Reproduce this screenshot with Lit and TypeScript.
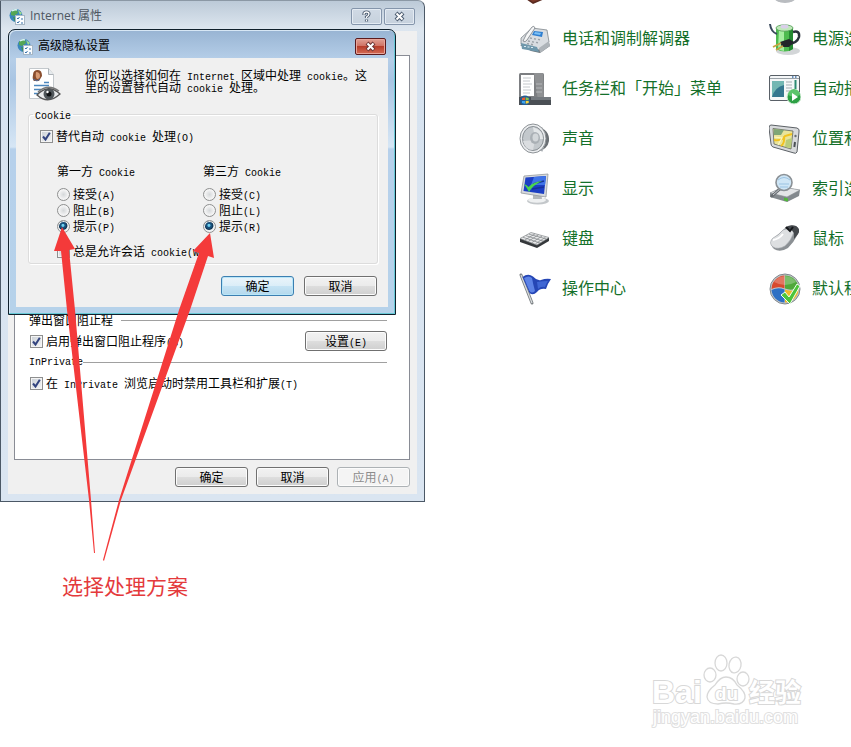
import { LitElement, html, css, svg, nothing, TemplateResult } from "lit";
import { customElement, property } from "lit/decorators.js";

// Bitmap-style dialog text: full-width glyphs at 12px, half-width runs at 6px per letter.
const mixed = (text: string) =>
  text
    .split(/([\x20-\x7e]+)/)
    .filter((part) => part)
    .map((part) => (/^[\x20-\x7e]/.test(part) ? html`<span class="half">${part}</span>` : part));

const icons: Record<string, TemplateResult> = {
  mail: svg`<path d="M4 24 L20 18 L28 25 L14 31Z" fill="#5a2a20"/><path d="M4 22 L20 17 L28 24 L14 29Z" fill="#7d3a2b"/>`,
  font: svg`<ellipse cx="16" cy="24" rx="11" ry="6" fill="#b9bcc0"/><ellipse cx="15" cy="22" rx="9" ry="5" fill="#dcdee1"/>`,
  phone: svg`
    <path d="M1 22 L12 28 L21 30 L31 23 L30 20 L14 18Z" fill="#6b7176"/>
    <path d="M2 15 L13 5 L28 7 L30 19 L20 27 L2 21Z" fill="#d9dde1" stroke="#7f868c" stroke-width=".8"/>
    <path d="M2 20 L18 24 L20 29 L3 26Z" fill="#6f98ac"/><path d="M20 25 L30 18 L31 23 L21 30Z" fill="#aeb4b9"/>
    <path d="M15 8 L24 9 L23 14 L13 12Z" fill="#2f7fd0"/><path d="M16 9 L22 10 L21 12 L15 11Z" fill="#7cc0f5"/>
    <path d="M11 15l2 .4m2 .3l2 .4m2 .3l2 .4M9 18l2 .4m2 .3l2 .4m2 .3l2 .4M8 20.600l2 .4m2 .3l2 .4" stroke="#9aa1a7" stroke-width="1.400"/>
    <path d="M4 18 Q6 12 13 4 Q15 2 16 5 L8 17 Q6 20 4 18Z" fill="#f5f6f7" stroke="#777e84" stroke-width=".8"/>
    <path d="M5 23.500h2m1.500 .5h2m1.500 .5h2" stroke="#dcebf2" stroke-width="1.200"/>`,
  taskbar: svg`
    <rect x="0" y="0" width="25" height="28" rx="1.500" fill="#7d7f82"/><path d="M15 0h9l1 28h-6z" fill="#8f9193"/>
    <rect x="2" y="2" width="13" height="21" fill="#fff"/>
    <path d="M4 5h8M4 8h7M4 11h9M4 14h7M4 17h8M4 20h7" stroke="#c4c8cc"/>
    <path d="M17 11h6M17 15h6M17 19h6" stroke="#b5b7ba" stroke-width="1"/>
    <rect x="0" y="24" width="32" height="8" fill="#4a4f55"/><path d="M12 24h20v3H12z" fill="#74797e"/>
    <circle cx="6" cy="27.500" r="5" fill="#215e98"/>
    <path d="M3 25l3-.7v2.800H3z" fill="#e65c30"/><path d="M6.700 24.200l3 .7v2.300h-3z" fill="#8bc34a"/>
    <path d="M3 28h3v2.800L3 30z" fill="#3ea5f0"/><path d="M6.700 28h3v2l-3 .8z" fill="#fbd53e"/>`,
  sound: svg`
    <path d="M18 3 Q31 7 30 18 Q29 26 18 29Z" fill="#6a6f74"/><path d="M22 5 Q28 15 22 28" stroke="#a7acb1" stroke-width="3" fill="none"/>
    <ellipse cx="14" cy="15.500" rx="13" ry="14.500" fill="#eceef0" stroke="#8d9296"/>
    <ellipse cx="14" cy="15.500" rx="10.500" ry="12" fill="#c3c8cc" stroke="#8a9095"/>
    <path d="M14 4 Q24 7 24 16 L16 16Z" fill="#e3e6e8"/><path d="M4 18 Q6 27 14 27 L16 17Z" fill="#dadde0"/>
    <ellipse cx="16" cy="15" rx="5" ry="6" fill="#aab0b5"/><ellipse cx="16.500" cy="14.500" rx="3" ry="4" fill="#d3d7da"/>`,
  display: svg`
    <ellipse cx="19" cy="28" rx="11" ry="3.500" fill="#c3c7ca"/><ellipse cx="18" cy="27" rx="9" ry="2.800" fill="#eef0f1"/>
    <path d="M14 20h8l1 6h-9z" fill="#b4b8bb"/>
    <path d="M5 3 L29 1 L27 24 L2 20Z" fill="#d7dadd" stroke="#94999d" stroke-width=".8"/>
    <path d="M6.500 4.500 L27 3 L25 21 L4.500 18Z" fill="#1c3fc4"/><path d="M15 4 L27 3 L26 12 L12 12Z" fill="#3f74e8"/>
    <path d="M14 11 L25 8 M13 16 L25 14" stroke="#16309a" stroke-width="1.500"/>
    <path d="M5 11 Q8 12 9.500 14 Q14 9 23 8 Q14 12 10 19 Q8 15 5 11Z" fill="#4ad64c"/>`,
  keyboard: svg`
    <path d="M1 16 L12 10 L30 15 L30 18 L18 25 L1 19Z" fill="#35383b"/>
    <path d="M1 15.500 L12 9.500 L30 14.500 L18 22Z" fill="#e8e9ea" stroke="#85898c" stroke-width=".7"/>
    <path d="M4 14.300l17 5.700M7 12.700l17 5.300M10 11.200l17 4.600M6 17l10-6.200M9.500 18.200l10-6.400M13 19.500l10-6.400M16.500 20.700l10-6.400" stroke="#7d8184" stroke-width=".7" fill="none"/>`,
  flag: svg`
    <path d="M2 2 L13 30" stroke="#7c8184" stroke-width="3" stroke-linecap="round"/><path d="M2 2 L13 30" stroke="#d9dcde" stroke-width="1.200"/>
    <path d="M3.500 4 Q9 0 14 3.500 Q18 8 22 7 Q27 5 32 6 Q29 10 27 16 Q21 15 18 19 Q14 23 10.500 20Z" fill="#2546b5"/>
    <path d="M5 5 Q10 2 13 5 Q14 11 16 18 Q13 21 10.500 18Z" fill="#5d83e6"/><path d="M18 9 Q24 8 29 8 Q27 11 26 14 Q22 13 19 16Z" fill="#3f66d4"/>`,
  power: svg`
    <ellipse cx="19" cy="28" rx="12" ry="4" fill="#d3d6d8"/>
    <path d="M7 5h17v21q-8 5-17 0z" fill="#4dbb4f"/><path d="M10 6h5v22q-4-.5-6-2z" fill="#a5eda0"/><path d="M20 6h4v20l-4 2z" fill="#258a31"/>
    <ellipse cx="15.500" cy="5" rx="8.500" ry="3.200" fill="#bfe8ba" stroke="#4f9a52" stroke-width=".8"/><ellipse cx="15.500" cy="3.600" rx="4" ry="2" fill="#d9cfe9"/>
    <path d="M1 1 Q2 9 8 11" stroke="#3a4a5c" stroke-width="2" fill="none"/>
    <path d="M24 9 Q31 7 30 14 Q28 21 18 21" stroke="#2a323a" stroke-width="2.500" fill="none"/>
    <path d="M11 19 L20 16 L25 19 L20 24 L13 24Z" fill="#22262a"/><path d="M4 24l8-4M7 27l7-4" stroke="#c8a240" stroke-width="1.800"/>`,
  autoplay: svg`
    <rect x=".5" y="2.500" width="30" height="25" rx="1.500" fill="#f5f7f8" stroke="#596067"/>
    <path d="M1 5.500h29" stroke="#9aa2a8"/><path d="M23 4h1.500M26 4h1.500" stroke="#3a6fa8" stroke-width="1.500"/>
    <rect x="3" y="8" width="12" height="16" fill="#73b7b3"/><path d="M3 24 Q6 14 15 12v12z" fill="#35778f"/>
    <path d="M17 9h6M17 12h6M17 15h6M17 18h4" stroke="#a3abb1"/><path d="M26.500 7v9" stroke="#2d8a73" stroke-width="2"/>
    <circle cx="25" cy="24" r="7" fill="#2da044" stroke="#d6efd9"/><path d="M19 22a6 6 0 0 1 12 0q-6 3-12 0z" fill="#5dc56c"/><path d="M23 20l6 4-6 4z" fill="#fff"/>`,
  location: svg`
    <path d="M2 2 L28 5 Q31 6 30 9 L28 29 Q27 31 25 30 L4 24 Q2 23 2 21 L0 5 Q0 2 2 2Z" fill="#d8dadc" stroke="#5c6166"/>
    <path d="M4 5.500 L24 8 L22 26 L5 21Z" fill="#e9e49a" stroke="#60655f" stroke-width=".8"/>
    <path d="M5 6 L15 7 L12 12 L5 12Z" fill="#7fa676"/><path d="M17 17 L23 15 L22 25 L16 24Z" fill="#b9cc7a"/>
    <path d="M5 17 Q14 18 16 13 L23 11 M15 13 Q16 20 12 23" stroke="#f2c21e" stroke-width="2" fill="none"/><path d="M5 14 L13 15 L9 22" stroke="#fff7bd" stroke-width="1.200" fill="none"/>
    <circle cx="26.500" cy="13" r="1.200" fill="#6a6f74"/><path d="M26 19l-.7 5" stroke="#4b5055" stroke-width="2"/>`,
  index: svg`
    <path d="M1 20 L14 14 L31 17 L30 23 L18 29 L1 24Z" fill="#83898e"/><path d="M1 20 L14 14 L31 17 L18 24Z" fill="#e3e5e7" stroke="#8a8f94" stroke-width=".6"/>
    <path d="M15 24.500l4 1v3l-4-1z" fill="#50b83a"/>
    <path d="M12 15 L3 23" stroke="#666b70" stroke-width="3" stroke-linecap="round"/><path d="M12 15 L4 22" stroke="#c9cdd0" stroke-width="1"/>
    <circle cx="15" cy="9.500" r="8" fill="#cfe6f6" stroke="#8b9196" stroke-width="1.600"/><path d="M9 7q6-5 12 0M10 11h10M11 14h8" stroke="#9bc3e2" fill="none"/>`,
  mouse: svg`
    <path d="M15 6 Q20 1 27 3 Q32 6 29 11 Q25 19 19 25 Q11 30 5 26 Q0 21 3 16 Q9 12 15 6Z" fill="#8b9094"/>
    <path d="M14 7 Q20 4 25 9 Q22 18 16 23 Q9 27 4 24 Q-1 20 4 15 Q10 12 14 7Z" fill="#dddfe1" stroke="#a1a5a9" stroke-width=".6"/>
    <path d="M16 5 Q20 1 27 3 Q32 6 29 11 L25 16 Q26 8 21 6Z" fill="#44484c"/><path d="M17 4l4 4 3-4" stroke="#14171a" stroke-width="2" fill="none"/><path d="M4 17q6-1 10-6" stroke="#fff" stroke-width="2" fill="none"/>`,
  programs: svg`
    <circle cx="16" cy="16" r="15" fill="#c4c9cd" stroke="#81878c"/>
    <path d="M15.500 15.500V2.500A13.500 13.500 0 0 0 2.500 16Q9 13 15.500 15.500Z" fill="#d8492d"/><path d="M16 15.500V2.500A13.500 13.500 0 0 1 29.500 15Q22 18 16 15.500Z" fill="#4fa83a"/>
    <path d="M15.500 16.500V29.500A13.500 13.500 0 0 1 2.500 17Q9 14 15.500 16.500Z" fill="#2e70c4"/><path d="M16 16.500V29.500A13.500 13.500 0 0 0 29.500 16Q22 19 16 16.500Z" fill="#f2b929"/>
    <path d="M5 9a13 13 0 0 1 22 0q-11 6-22 0z" fill="#fff" opacity=".25"/>
    <path d="M12 22 L16 19 L20 24 L28 11 L31 13 L21 31Z" fill="#4cc43a" stroke="#f1fff0" stroke-width="1"/>`,
};

@customElement("applet-icon")
class AppletIcon extends LitElement {
  @property() name = "";
  static styles = css`
    :host { display: block; flex: none; width: 32px; height: 32px; }
    svg { display: block; width: 32px; height: 32px; }
  `;
  render() {
    return html`<svg viewBox="0 0 32 32" fill="none" aria-hidden="true">${icons[this.name]}</svg>`;
  }
}

@customElement("app-root")
class AppRoot extends LitElement {
  static styles = css`
    :host {
      display: block; position: relative; min-height: 100vh; overflow: hidden; background: #fff;
      font-family: "Liberation Sans", "Noto Sans CJK SC", sans-serif; font-size: 12px; color: #000;
    }
    * { box-sizing: border-box; }
    h2, p { margin: 0; font-weight: 400; }
    .half { font-family: "Liberation Mono", monospace; font-size: 10px; line-height: 1px; white-space: pre; }

    .applets {
      display: grid; grid-template-columns: repeat(2, 250px); grid-auto-rows: 50px;
      margin: -36px 0 0 519px;
    }
    .applet {
      display: flex; align-items: center; gap: 11px; white-space: nowrap; text-decoration: none;
      font: 16px "Noto Sans CJK SC", sans-serif; color: #14702a;
    }
    .applet span { padding-bottom: 4px; }

    .window { position: absolute; display: flex; flex-direction: column; font-family: "Noto Sans CJK SC", sans-serif; line-height: 16px; }
    .properties {
      left: 0; top: 0; width: 425px; height: 502px; padding: 0 7px 7px;
      border: 1px solid #4b5866; border-top-color: #8b98a5; border-radius: 0 7px 0 0;
      background: linear-gradient(#bccad8, #dde6ef 28px, #d7e3f0 60px, #dae5f1);
    }
    .advanced {
      left: 8px; top: 29px; width: 388px; height: 286px; padding: 0 7px 7px;
      border: 1px solid #10202c; border-radius: 7px 7px 0 0; box-shadow: inset -1px -1px #67c9d6, inset 1px 1px #d7e7f5;
      background: linear-gradient(#98b4d3, #b5cee8 29px, #a9c5e3 50px, #d6e6f5 117px, #b6d0eb 119px, #b6d2ea);
    }
    .caption { display: flex; align-items: center; gap: 4px; flex: none; }
    .properties .caption { height: 30px; color: #4d5660; padding: 0 2px 0 1px; }
    .properties .cap + .cap { margin-left: -2px; }
    .advanced .caption { height: 28px; padding: 4px 2px 0 1px; }
    .caption h2 { flex: 1; font: 12px/16px "Open Sans", "Noto Sans CJK SC", sans-serif; }
    .caption svg { width: 17px; height: 17px; flex: none; }
    .cap {
      display: grid; place-items: center; width: 31px; height: 17px; padding: 0;
      border: 1px solid #8495ab; border-radius: 2px; background: linear-gradient(#d0dae5, #c6d1dd); box-shadow: inset 0 0 0 1px #e4ebf3;
    }
    .caption .cap svg { width: 13px; height: 13px; }
    .cap.close { border-color: #5b1a1d; background: linear-gradient(#e0a095, #d07365 46%, #b73d2b 50%, #d46c55); box-shadow: inset 0 0 0 1px #e8a59a; }

    .body { flex: 1; display: flex; flex-direction: column; background: #f0f0f0; }
    .properties .body { padding: 24px 7px 7px 6px; gap: 7px; }
    .sheet { flex: 1; padding: 256px 22px 0 14px; border: 1px solid #898c95; background: #fff; }
    .rule { display: flex; align-items: center; gap: 8px; height: 16px; white-space: nowrap; }
    .rule.tight { gap: 0; }
    .rule::after { content: ""; flex: 1; height: 1px; background: #a0a0a0; }
    .line { display: flex; align-items: center; justify-content: space-between; height: 26px; padding-left: 1px; }
    .line .btn { width: 82px; }
    .buttons { display: flex; justify-content: flex-end; gap: 8px; }

    .btn {
      width: 73px; height: 20px; padding: 0 0 1px; white-space: nowrap; color: #000;
      font: 12px/16px "Noto Sans CJK SC", sans-serif;
      border: 1px solid #707070; border-radius: 3px; box-shadow: inset 0 0 0 1px #fcfcfc;
      background: linear-gradient(#f2f2f2, #ebebeb 48%, #dddddd 52%, #cfcfcf);
    }
    .btn.primary { border-color: #3c7fb1; box-shadow: inset 0 0 0 1px #b9e6f8; background: linear-gradient(#eaf4fa, #dceef8 48%, #c5e3f4 52%, #b4d8ec); }
    .btn:disabled { color: #8c8c8c; border-color: #adb2b5; background: #f4f4f4; }

    .option { display: flex; align-items: center; gap: 3px; height: 16px; white-space: nowrap; }
    input { appearance: none; flex: none; width: 13px; height: 13px; margin: 0; border: 1px solid #8e8f8f; background: linear-gradient(135deg, #c9cfd5, #f6f6f6); box-shadow: inset 0 0 0 1px #f4f4f4; }
    .tick { position: relative; display: flex; }
    .tick svg { position: absolute; inset: 0; width: 13px; height: 13px; pointer-events: none; }
    input[type="radio"] { border-radius: 50%; background: radial-gradient(#d5d8da, #f4f4f4 60%); }
    input[type="radio"]:checked { background: radial-gradient(circle at 45% 40%, #6fd0f0 0 1px, #17507c 2px 3px, #0d2f4c 4px, #e8eef2 5px); }

    .advanced .body { padding: 9px 10px 0 12px; }
    .intro { display: flex; gap: 23px; line-height: 12px; }
    .intro svg { flex: none; width: 34px; height: 36px; }
    .intro p { flex: 1; padding-top: 2px; white-space: nowrap; }
    fieldset { min-width: 0; margin: 3px 0 12px; padding: 6px 12px 4px 11px; border: 1px solid #dcdcdc; border-radius: 3px; box-shadow: inset 1px 1px #fff, 1px 1px #fff; }
    fieldset fieldset { margin: 0; padding: 0; border: 0; box-shadow: none; }
    .box > legend { margin-left: -7px; padding: 0 2px; line-height: 16px; }
    .parties { display: grid; grid-template-columns: 146px 1fr; padding: 19px 0 0 17px; }
    .parties legend { padding: 0 0 7px; line-height: 16px; }
    .session { padding: 0 0 0 17px; margin-top: 9px; }
    .advanced .buttons { gap: 10px; padding-right: 1px; }

    .arrows { position: absolute; left: 0; top: 0; width: 425px; height: 600px; pointer-events: none; }
    .note { position: absolute; left: 62px; top: 570px; font: 21px/30px "Noto Sans CJK SC", sans-serif; color: #e43a3c; white-space: nowrap; }
    .mark { position: absolute; right: 41px; bottom: 14px; width: 165px; height: 80px; }
    .mark text { fill: #fff; stroke: #d8d8d8; stroke-width: 2px; paint-order: stroke; font-family: "Liberation Sans", "Noto Sans CJK SC", sans-serif; font-weight: 700; }
    .mark .url { font-weight: 400; stroke: #e0e0e0; }
  `;

  private check(text: string, checked: boolean, extra = "") {
    return html`<label class="option ${extra}"
      ><span class="tick"><input type="checkbox" .checked=${checked} />${checked
        ? html`<svg viewBox="0 0 13 13" aria-hidden="true"><path d="M3 6.500 L5.500 9.500 L9.800 2.800" fill="none" stroke="#33447f" stroke-width="2" /></svg>`
        : nothing}</span
      ><span>${mixed(text)}</span></label
    >`;
  }

  private party(title: string, name: string, keys: string[]) {
    return html`<fieldset>
      <legend>${mixed(title)}</legend>
      ${["接受", "阻止", "提示"].map(
        (word, i) => html`<label class="option"><input type="radio" name=${name} .checked=${i === 2} /><span>${mixed(`${word}(${keys[i]})`)}</span></label>`
      )}
    </fieldset>`;
  }

  private globe() {
    return html`<svg viewBox="0 0 17 17" aria-hidden="true">
      <circle cx="7" cy="7.500" r="6.500" fill="#3b86bd" /><path d="M2 4 Q5 0 8 1.500 L9 5 L5 8 L2 7Z" fill="#55a653" /><path d="M9 2 L13 5 L11 7Z" fill="#9fdc8c" /><path d="M4 9 L8 10 L6 14Z" fill="#3c9350" />
      <path d="M3 3q3-2 5-1" stroke="#d9f3f7" stroke-width="1.500" fill="none" />
      <rect x="6.500" y="7.500" width="9" height="9" fill="#fafcfe" stroke="#a6b6c4" /><path d="M8 10l1 1 1.500-2M8 14l1 1 1.500-2M12 11h2M12 15h2" stroke="#3771aa" fill="none" />
    </svg>`;
  }

  private cross(color: string) {
    return html`<svg viewBox="0 0 13 13" aria-hidden="true"><path d="M3 3l7 7M10 3l-7 7" stroke=${color} stroke-width="4" /><path d="M3.500 3.500l6 6M9.500 3.500l-6 6" stroke="#fff" stroke-width="2" /></svg>`;
  }

  render() {
    const applets: [string, string][] = [
      ["mail", ""], ["font", ""],
      ["phone", "电话和调制解调器"], ["power", "电源选项"],
      ["taskbar", "任务栏和「开始」菜单"], ["autoplay", "自动播放"],
      ["sound", "声音"], ["location", "位置和其他传感器"],
      ["display", "显示"], ["index", "索引选项"],
      ["keyboard", "键盘"], ["mouse", "鼠标"],
      ["flag", "操作中心"], ["programs", "默认程序"],
    ];
    return html`
      <nav class="applets">
        ${applets.map(([icon, label]) => html`<a class="applet" href="#"><applet-icon name=${icon}></applet-icon><span>${label}</span></a>`)}
      </nav>

      <section class="window properties">
        <header class="caption">
          ${this.globe()}
          <h2>Internet 属性</h2>
          <button class="cap" aria-label="帮助">
            <svg viewBox="0 0 13 13" aria-hidden="true"><path d="M4 5V4q0-2 2.500-2T9 4q0 1.500-2.500 3v1M6.500 9.500v2" fill="none" stroke="#4c5c70" stroke-width="3.200" /><path d="M4 4.800V4q0-2 2.500-2T9 4q0 1.500-2.500 3v1M6.500 9.800v1.500" fill="none" stroke="#fff" stroke-width="1.300" /></svg>
          </button>
          <button class="cap" aria-label="关闭">${this.cross("#4c5c70")}</button>
        </header>
        <div class="body">
          <div class="sheet">
            <div class="rule">弹出窗口阻止程</div>
            <div class="line">${this.check("启用弹出窗口阻止程序(B)", true)}<button class="btn">${mixed("设置(E)")}</button></div>
            <div class="rule tight">${mixed("InPrivate")}</div>
            <div class="line">${this.check("在 InPrivate 浏览启动时禁用工具栏和扩展(T)", true)}</div>
          </div>
          <div class="buttons">
            <button class="btn">确定</button>
            <button class="btn">取消</button>
            <button class="btn" disabled>${mixed("应用(A)")}</button>
          </div>
        </div>
      </section>

      <section class="window advanced">
        <header class="caption">
          ${this.globe()}
          <h2>高级隐私设置</h2>
          <button class="cap close" aria-label="关闭">${this.cross("#6b3434")}</button>
        </header>
        <div class="body">
          <div class="intro">
            <svg viewBox="0 0 34 36" aria-hidden="true">
              <path d="M1.500 1.500h19l5 6v24h-24z" fill="#fff" stroke="#c3c8cc" /><path d="M20.500 1.500v6h5" fill="#e6eaed" stroke="#adb3b8" />
              <path d="M5 8q0-5 5-5 4 0 4 6l-3 5H6q-2-2-1-6z" fill="#8a4e2e" /><path d="M8 5q4 0 4 4 0 3-3 3-2-2-1-7z" fill="#d89b74" /><path d="M5 12l4 2 3-2" stroke="#526fa0" fill="none" />
              <path d="M6 18.500h15M6 22.500h7M6 26.500h5M16 15.500h5" stroke="#4c86bd" stroke-width="1.500" />
              <path d="M9 28Q20 16 32 27Q20 38 9 28Z" fill="#e9ebec" stroke="#555" stroke-width="1.300" /><path d="M10 25Q20 16 31 24" stroke="#777" stroke-width="1.500" fill="none" />
              <circle cx="21" cy="27" r="5.500" fill="#50565a" /><circle cx="21" cy="27" r="2.500" fill="#101214" /><circle cx="19.500" cy="25" r="1.200" fill="#fff" />
            </svg>
            <p>${mixed("你可以选择如何在 Internet 区域中处理 cookie。这")}<br />${mixed("里的设置替代自动 cookie 处理。")}</p>
          </div>
          <fieldset class="box">
            <legend>${mixed("Cookie")}</legend>
            ${this.check("替代自动 cookie 处理(O)", true)}
            <div class="parties">
              ${this.party("第一方 Cookie", "first", ["A", "B", "P"])}
              ${this.party("第三方 Cookie", "third", ["C", "L", "R"])}
            </div>
            ${this.check("总是允许会话 cookie(W)", false, "session")}
          </fieldset>
          <div class="buttons">
            <button class="btn primary">确定</button>
            <button class="btn">取消</button>
          </div>
        </div>
      </section>

      <svg class="arrows" viewBox="0 0 425 600" aria-hidden="true">
        <path d="M62 227 L75 249 L69 250 L75 310 L91 500 L95 553 H94 L89 500 L67 310 L61 251 L54 251Z" fill="#f43a3a" />
        <path d="M210 233 L214 258 L208 256 L190 310 L121 500 L104 561 L103 560 L119 500 L179 310 L199 253 L193 251Z" fill="#f43a3a" />
      </svg>
      <p class="note">选择处理方案</p>

      <svg class="mark" viewBox="0 0 165 80" role="img" aria-label="Baidu">
        <g fill="#fff" stroke="#d8d8d8" stroke-width="1.300">
          <ellipse cx="65" cy="22" rx="6" ry="7" /><ellipse cx="76" cy="10" rx="6" ry="8" />
          <ellipse cx="90" cy="12" rx="6" ry="8" transform="rotate(10 90 12)" /><ellipse cx="98" cy="26" rx="6" ry="7" />
          <path d="M81 24 Q88 24 92 32 Q101 39 100 45 Q98 52 89 51 Q81 49 73 51 Q63 51 62 44 Q62 38 70 32 Q75 24 81 24Z" />
        </g>
        <text x="7" y="50" font-size="32">Bai</text>
        <text x="70" y="47" font-size="19">du</text>
        <text x="104" y="49" font-size="26">经验</text>
        <text class="url" x="8" y="70" font-size="18">jingyan.baidu.com</text>
      </svg>
    `;
  }
}
